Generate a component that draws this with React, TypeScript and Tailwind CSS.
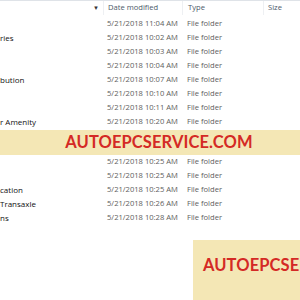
import React from 'react'

const top = [
  { name: '', date: '5/21/2018 11:04 AM' },
  { name: 'ries', date: '5/21/2018 10:02 AM' },
  { name: '', date: '5/21/2018 10:03 AM' },
  { name: '', date: '5/21/2018 10:04 AM' },
  { name: 'bution', date: '5/21/2018 10:07 AM' },
  { name: '', date: '5/21/2018 10:10 AM' },
  { name: '', date: '5/21/2018 10:11 AM' },
  { name: 'r Amenity', date: '5/21/2018 10:20 AM' },
]

const bottom = [
  { name: '', date: '5/21/2018 10:25 AM' },
  { name: '', date: '5/21/2018 10:25 AM' },
  { name: 'cation', date: '5/21/2018 10:25 AM' },
  { name: 'Transaxle', date: '5/21/2018 10:26 AM' },
  { name: 'ns', date: '5/21/2018 10:28 AM' },
]

const Row = ({ name, date }: { name: string; date: string }) => (
  <div className='grid grid-cols-[103px_79px_81px_37px] h-[14px] items-center text-[7.6px] leading-none'>
    <span className='text-[#111] text-[8px] whitespace-nowrap'>{name}</span>
    <span className='pl-[4px] text-[#5e5e5e] whitespace-nowrap'>{date}</span>
    <span className='pl-[5px] text-[#5e5e5e] whitespace-nowrap'>File folder</span>
    <span></span>
  </div>
)

export default function App() {
  return (
    <div className='w-[300px] h-[300px] bg-white overflow-hidden flex flex-col' style={{ fontFamily: '"Open Sans", "Noto Sans", sans-serif' }}>
      <div className='h-[20px] border-t border-[#dfe3e8] grid grid-cols-[103px_79px_81px_37px] items-center text-[7.6px] leading-none text-[#4c5a6a]'>
        <div className='flex justify-end pr-[4px] text-[6px] text-[#333]'>▼</div>
        <div className='pl-[4px] border-l border-[#eef0f3] h-full flex items-center'>Date modified</div>
        <div className='pl-[5px] border-l border-[#eef0f3] h-full flex items-center'>Type</div>
        <div className='pl-[4px] border-l border-[#eef0f3] h-full flex items-center'>Size</div>
      </div>
      <div className='mt-[2px]'>
        {top.map((r, i) => <Row key={i} {...r} />)}
      </div>
      <div className='h-[27px] mt-[1px] bg-[#f4e7b5] flex items-center justify-center pl-[18px]' style={{ fontFamily: 'Lato, sans-serif' }}>
        <span className='text-[#d42a25] font-bold text-[16.5px] tracking-[0.1px]'>AUTOEPCSERVICE.COM</span>
      </div>
      <div>
        {bottom.map((r, i) => <Row key={i} {...r} />)}
      </div>
      <div className='flex justify-end mt-[15px]'>
        <div className='w-[107px] h-[60px] bg-[#f4e7b5] flex items-center pl-[10px] pb-[10px] overflow-hidden' style={{ fontFamily: 'Lato, sans-serif' }}>
          <span className='text-[#d42a25] font-bold text-[16.5px] tracking-[0.1px] whitespace-nowrap'>AUTOEPCSERVICE.COM</span>
        </div>
      </div>
    </div>
  )
}
